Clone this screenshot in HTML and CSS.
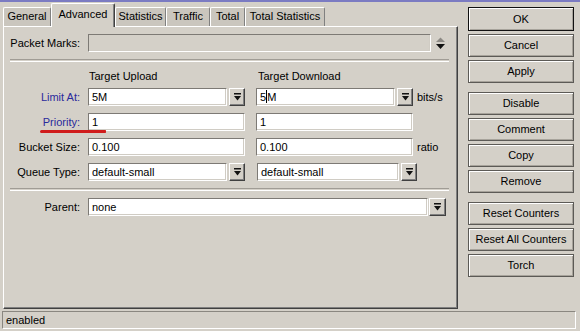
FILE: index.html
```html
<!DOCTYPE html>
<html>
<head>
    <title>Queue &lt;queue1&gt;</title>
    <link rel="stylesheet" href="styles.css">
</head>
<body>
    <div class="window">
        <div class="main">
            <div class="left">
                <div class="tabs">
                    <div class="tab w-general">General</div>
                    <div class="tab active w-advanced">Advanced</div>
                    <div class="tab w-statistics">Statistics</div>
                    <div class="tab w-traffic">Traffic</div>
                    <div class="tab w-total">Total</div>
                    <div class="tab w-totalstats">Total Statistics</div>
                </div>

                <div class="panel">
                    <div class="row">
                        <span class="label">Packet Marks:</span>
                        <div class="field disabled wide-packet"></div>
                        <svg class="spin" width="9" height="13" viewBox="0 0 9 13">
                            <polygon points="0,5 9,5 4.5,0.5" fill="#8c8984"/>
                            <polygon points="0,7 9,7 4.5,12" fill="#111"/>
                        </svg>
                    </div>

                    <div class="sep"></div>

                    <div class="row head">
                        <span class="label"></span>
                        <span class="col">Target Upload</span>
                        <span class="col">Target Download</span>
                    </div>

                    <div class="row">
                        <span class="label blue">Limit At:</span>
                        <div class="combo">
                            <div class="field">5M</div>
                            <div class="drop"><svg width="7" height="8" viewBox="0 0 7 8"><rect x="0" y="0" width="7" height="1.5" fill="#111"/><polygon points="0,3 7,3 3.5,7.5" fill="#111"/></svg></div>
                        </div>
                        <div class="combo">
                            <div class="field">5<span class="caret"></span>M</div>
                            <div class="drop"><svg width="7" height="8" viewBox="0 0 7 8"><rect x="0" y="0" width="7" height="1.5" fill="#111"/><polygon points="0,3 7,3 3.5,7.5" fill="#111"/></svg></div>
                        </div>
                        <span class="unit">bits/s</span>
                    </div>

                    <div class="row">
                        <span class="label blue">Priority:</span>
                        <div class="field col">1</div>
                        <div class="field col">1</div>
                    </div>

                    <div class="row">
                        <span class="label">Bucket Size:</span>
                        <div class="field col">0.100</div>
                        <div class="field col">0.100</div>
                        <span class="unit">ratio</span>
                    </div>

                    <div class="row">
                        <span class="label">Queue Type:</span>
                        <div class="combo">
                            <div class="field">default-small</div>
                            <div class="drop"><svg width="7" height="8" viewBox="0 0 7 8"><rect x="0" y="0" width="7" height="1.5" fill="#111"/><polygon points="0,3 7,3 3.5,7.5" fill="#111"/></svg></div>
                        </div>
                        <div class="combo combo-q2">
                            <div class="field">default-small</div>
                            <div class="drop"><svg width="7" height="8" viewBox="0 0 7 8"><rect x="0" y="0" width="7" height="1.5" fill="#111"/><polygon points="0,3 7,3 3.5,7.5" fill="#111"/></svg></div>
                        </div>
                    </div>

                    <div class="sep sep-low"></div>

                    <div class="row row-parent">
                        <span class="label">Parent:</span>
                        <div class="combo combo-parent">
                            <div class="field">none</div>
                            <div class="drop"><svg width="7" height="8" viewBox="0 0 7 8"><rect x="0" y="0" width="7" height="1.5" fill="#111"/><polygon points="0,3 7,3 3.5,7.5" fill="#111"/></svg></div>
                        </div>
                    </div>
                </div>
            </div>

            <div class="buttons">
                <div class="btn default">OK</div>
                <div class="btn">Cancel</div>
                <div class="btn">Apply</div>
                <div class="btn spaced">Disable</div>
                <div class="btn">Comment</div>
                <div class="btn">Copy</div>
                <div class="btn">Remove</div>
                <div class="btn spaced">Reset Counters</div>
                <div class="btn">Reset All Counters</div>
                <div class="btn">Torch</div>
            </div>
        </div>

        <div class="status">enabled</div>
    </div>

    <div class="mark"></div>
</body>
</html>
```

FILE: styles.css
```css
body {
    margin: 0;
    background: #d4d0c8;
    font-family: "Liberation Sans", Arial, sans-serif;
    font-size: 11px;
    color: #000;
}

.window {
    width: 580px;
    height: 331px;
    box-sizing: border-box;
    border-top: 2px solid #7b7bc2;
    display: flex;
    flex-direction: column;
}

.main {
    display: flex;
    height: 307px;
}

.left {
    width: 455px;
    margin-left: 3px;
    display: flex;
    flex-direction: column;
}

/* tabs */
.tabs {
    display: flex;
    align-items: flex-end;
    height: 23px;
    margin-top: 1px;
    position: relative;
    z-index: 1;
}

.tab {
    box-sizing: border-box;
    height: 19px;
    line-height: 17px;
    text-align: center;
    background: #cac6be;
    border-top: 1px solid #fff;
    border-left: 1px solid #fff;
    border-right: 1px solid #808080;
    border-radius: 2px 2px 0 0;
}

.tab.active {
    height: 24px;
    margin-bottom: -1px;
    line-height: 20px;
    background: #d4d0c8;
    border-right: 1px solid #404040;
    box-shadow: inset -1px 0 0 #808080;
}

.w-general { width: 48px; }
.w-advanced { width: 64px; }
.w-statistics { width: 51px; }
.w-traffic { width: 44px; }
.w-total { width: 35px; }
.w-totalstats { width: 80px; }

.panel {
    box-sizing: border-box;
    height: 283px;
    padding-top: 7px;
    border-top: 1px solid #fff;
    border-left: 1px solid #fff;
    border-right: 1px solid #404040;
    border-bottom: 1px solid #404040;
    box-shadow: inset -1px -1px 0 #808080;
}

.row {
    display: flex;
    align-items: center;
    height: 18px;
    margin-bottom: 7px;
}

.label {
    box-sizing: border-box;
    width: 84px;
    padding-right: 8px;
    text-align: right;
    flex: none;
}

.blue {
    color: #2a2a9c;
}

.field {
    box-sizing: border-box;
    height: 18px;
    line-height: 16px;
    padding-left: 3px;
    background: #fff;
    border-top: 1px solid #7d7a75;
    border-left: 1px solid #7d7a75;
    border-right: 1px solid #fff;
    border-bottom: 1px solid #fff;
    box-shadow: inset -1px -1px 0 #d0ccc4;
    white-space: nowrap;
    overflow: hidden;
}

.field.disabled {
    background: #d4d0c8;
}

.wide-packet {
    width: 343px;
}

.spin {
    margin-left: 5px;
}

.col {
    width: 157px;
    margin-right: 11px;
}

.head {
    height: 14px;
    margin-bottom: 5px;
}

.head .col {
    padding-left: 1px;
}

.combo {
    display: flex;
    width: 157px;
    margin-right: 11px;
}

.combo .field {
    flex: 1;
}

.drop {
    box-sizing: border-box;
    width: 16px;
    height: 18px;
    margin-left: 2px;
    display: flex;
    align-items: center;
    justify-content: center;
    border-top: 1px solid #fff;
    border-left: 1px solid #fff;
    border-right: 1px solid #404040;
    border-bottom: 1px solid #404040;
    box-shadow: inset -1px -1px 0 #808080;
}

.combo-q2 {
    width: 160px;
    margin-left: 1px;
}

.combo-parent {
    width: 361px;
}

.combo-parent .drop {
    width: 17px;
    margin-left: 1px;
}

.unit {
    margin-left: -7px;
}

.caret {
    display: inline-block;
    width: 1px;
    height: 13px;
    background: #000;
    vertical-align: -2px;
}

.sep {
    height: 1px;
    margin: 2px 8px 7px 6px;
    border-top: 1px solid #a09c95;
    border-bottom: 1px solid #fff;
}

.sep-low {
    margin-top: 1px;
}

/* right buttons */
.buttons {
    width: 106px;
    margin-left: 10px;
    padding-top: 5px;
    display: flex;
    flex-direction: column;
    gap: 3px;
}

.btn {
    box-sizing: border-box;
    height: 23px;
    line-height: 21px;
    text-align: center;
    border: 1px solid #5c5a56;
    box-shadow: inset 1px 1px 0 #fff, inset -1px -1px 0 #a7a39b;
}

.btn.default {
    border: 1px solid #111;
    height: 24px;
    line-height: 22px;
}

.btn.spaced {
    margin-top: 6px;
}

.status {
    box-sizing: border-box;
    height: 18px;
    margin: 2px 4px 0 2px;
    padding-left: 3px;
    line-height: 16px;
    border-top: 1px solid #8a8780;
    border-left: 1px solid #8a8780;
    border-right: 1px solid #fff;
    border-bottom: 1px solid #fff;
}

/* red annotation stroke under Priority */
.mark {
    position: absolute;
    left: 40px;
    top: 130px;
    width: 66px;
    height: 3px;
    background: #d01c1c;
    border-radius: 2px 1px 1px 2px;
}
```
